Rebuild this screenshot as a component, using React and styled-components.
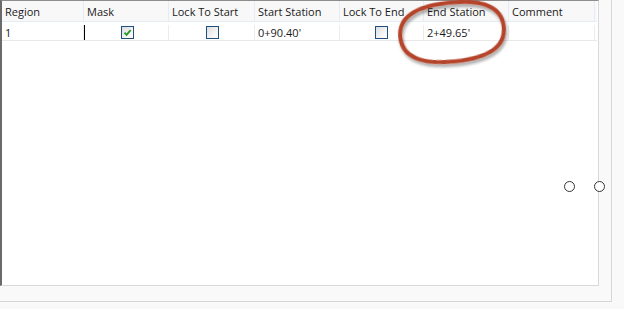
import React from "react";
import styled, { createGlobalStyle } from "styled-components";

const GlobalStyle = createGlobalStyle`
	html, body {
		margin: 0;
		padding: 0;
		background: #f9f9f9;
	}
	body {
		font-family: "Open Sans", "Liberation Sans", sans-serif;
		font-size: 11px;
		color: #111;
	}
`;

const Page = styled.div`
	position: relative;
	width: 624px;
	height: 309px;
	overflow: hidden;
`;

const Frame = styled.div`
	width: 612px;
	height: 302px;
	box-sizing: border-box;
	border-right: 1px solid #d6d6d6;
	border-bottom: 1px solid #d6d6d6;
	background: #f9f9f9;
`;

const GridBox = styled.div`
	width: 599px;
	height: 286px;
	box-sizing: border-box;
	background: #fff;
	border-top: 1px solid #8c8c8c;
	border-left: 2px solid #6a6a6a;
	border-right: 1px solid #d9d9d9;
	border-bottom: 1px solid #d9d9d9;
`;

const Row = styled.div`
	display: grid;
	grid-template-columns: 82px 85px 86px 85px 84px 85px 86px;
	height: ${({ $header }) => ($header ? "21px" : "16px")};
	margin-top: ${({ $header }) => ($header ? "0" : "3px")};
	background: ${({ $header }) => ($header ? "#f8f8f8" : "#fff")};
	border-bottom: 1px solid ${({ $header }) => ($header ? "#e4ecf6" : "#e8e8e8")};
	box-sizing: border-box;
	width: 595px;
`;

const Cell = styled.div`
	display: flex;
	align-items: center;
	justify-content: ${({ $center }) => ($center ? "center" : "flex-start")};
	padding-left: ${({ $center }) => ($center ? "0" : "3px")};
	border-right: 1px solid ${({ $header }) => ($header ? "#e4ecf6" : "#ececec")};
	border-left: ${({ $focus }) => ($focus ? "1px solid #000" : "none")};
	white-space: nowrap;
	overflow: hidden;
	line-height: 1;
	color: #1a1a1a;
`;

const Box = styled.span`
	width: 11px;
	height: 11px;
	border: 1px solid #1f4f7f;
	background: linear-gradient(135deg, #dcdcdc 0%, #f4f4f4 60%, #fff 100%);
	display: flex;
	align-items: center;
	justify-content: center;
	margin-left: ${({ $shift }) => $shift || 0}px;
`;

const Handle = styled.div`
	position: absolute;
	top: 181px;
	left: ${({ $x }) => $x}px;
	width: 9px;
	height: 9px;
	border-radius: 50%;
	border: 1px solid #333;
	background: #fff;
`;

const Mark = styled.svg`
	position: absolute;
	left: 380px;
	top: 0;
	pointer-events: none;
`;

const headers = [
	"Region",
	"Mask",
	"Lock To Start",
	"Start Station",
	"Lock To End",
	"End Station",
	"Comment",
];

function Check({ checked, shift }) {
	return (
		<Box $shift={shift}>
			{checked && (
				<svg width="9" height="9" viewBox="0 0 9 9">
					<path d="M1.5 4.6 L3.6 6.8 L7.6 2.2" fill="none" stroke="#2a9a2a" strokeWidth="1.9" />
				</svg>
			)}
		</Box>
	);
}

export default function App() {
	return (
		<Page>
			<GlobalStyle />
			<Frame>
				<GridBox>
					<Row $header>
						{headers.map((h) => (
							<Cell key={h} $header>{h}</Cell>
						))}
					</Row>
					<Row>
						<Cell>1</Cell>
						<Cell $center $focus>
							<Check checked shift={1} />
						</Cell>
						<Cell $center>
							<Check shift={2} />
						</Cell>
						<Cell>0+90.40'</Cell>
						<Cell $center>
							<Check />
						</Cell>
						<Cell>2+49.65'</Cell>
						<Cell />
					</Row>
				</GridBox>
			</Frame>
			<Mark width="150" height="80" viewBox="0 0 150 80">
				<defs>
					<filter id="sh" x="-20%" y="-20%" width="140%" height="150%">
						<feGaussianBlur in="SourceAlpha" stdDeviation="1.5" />
						<feOffset dx="1" dy="3" />
						<feComponentTransfer>
							<feFuncA type="linear" slope="0.35" />
						</feComponentTransfer>
						<feMerge>
							<feMergeNode />
							<feMergeNode in="SourceGraphic" />
						</feMerge>
					</filter>
				</defs>
				<path
					d="M124 32 C124 51.5 106.3 61.5 72 61.5 C37.7 61.5 20 51.5 20 32 C20 12.5 37.7 2.5 72 2.5 C106.3 2.5 124 12.5 124 32 Z"
					transform="rotate(-6 72 32)"
					fill="none"
					stroke="#b4452c"
					strokeWidth="4"
					filter="url(#sh)"
				/>
			</Mark>
			<Handle $x={564} />
			<Handle $x={594} />
		</Page>
	);
}
